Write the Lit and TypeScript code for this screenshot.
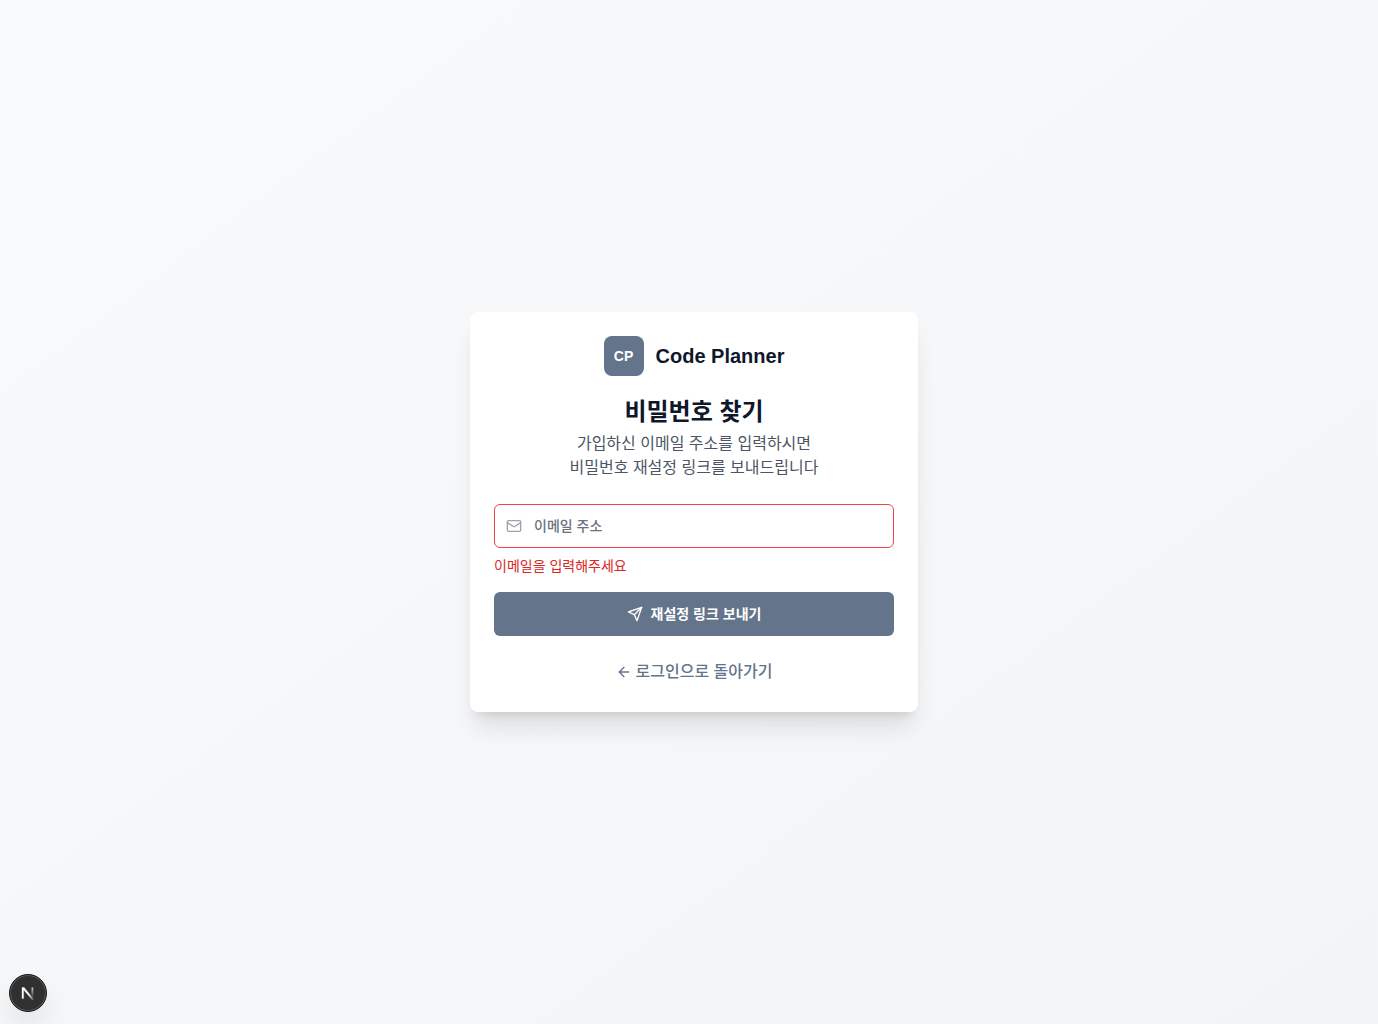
import { LitElement, html, css } from "lit";
import { customElement } from "lit/decorators.js";

@customElement("app-root")
export class AppRoot extends LitElement {
  static styles = css`
    :host {
      display: block;
      font-family: "Liberation Sans", "Noto Sans CJK KR", sans-serif;
      font-size: 16px;
      line-height: 24px;
      color: #0f172a;
    }
    *, *::before, *::after { box-sizing: border-box; }
    .page {
      min-height: 100vh;
      display: flex;
      align-items: center;
      justify-content: center;
      padding: 16px 16px 16px 26px;
      background: linear-gradient(to bottom right, #f8fafc, #f3f4f6);
    }
    .card {
      width: 100%;
      max-width: 448px;
      padding: 24px 24px 28px;
      display: flex;
      flex-direction: column;
      gap: 24px;
      background: #fff;
      border-radius: 8px;
      box-shadow: 0 20px 25px -5px rgb(0 0 0 / 0.1), 0 8px 10px -6px rgb(0 0 0 / 0.1);
    }
    .header { text-align: center; }
    .brand {
      display: flex;
      align-items: center;
      justify-content: center;
      gap: 12px;
      margin-bottom: 16px;
    }
    .mark {
      width: 40px;
      height: 40px;
      display: flex;
      align-items: center;
      justify-content: center;
      border-radius: 8px;
      background: #64748b;
      color: #fff;
      font-size: 14px;
      font-weight: 700;
    }
    .name { font-size: 20px; line-height: 28px; font-weight: 700; }
    h1 { margin: 0; font-size: 24px; line-height: 40px; font-weight: 700; }
    .lead { margin: 0; color: #4b5563; }
    form { display: flex; flex-direction: column; gap: 16px; }
    .group { display: flex; flex-direction: column; gap: 8px; }
    .field {
      display: flex;
      align-items: center;
      gap: 12px;
      height: 44px;
      padding: 0 11px;
      border: 1px solid #ef4444;
      border-radius: 6px;
      background: #fff;
      color: #9ca3af;
    }
    svg { display: block; flex: none; }
    input {
      flex: 1;
      min-width: 0;
      height: 100%;
      padding: 0;
      border: 0;
      outline: 0;
      background: none;
      font: inherit;
      font-size: 14px;
      font-weight: 500;
      color: #0f172a;
    }
    input::placeholder { color: #6b7280; opacity: 1; }
    .error { margin: 0; font-size: 14px; line-height: 20px; color: #dc2626; }
    .submit {
      display: flex;
      align-items: center;
      justify-content: center;
      gap: 8px;
      height: 44px;
      padding: 0 16px;
      border: 0;
      border-radius: 6px;
      background: #64748b;
      color: #fff;
      font: inherit;
      font-size: 14px;
      font-weight: 700;
      cursor: pointer;
    }
    .back {
      align-self: center;
      display: flex;
      align-items: center;
      gap: 4px;
      color: #64748b;
      font-weight: 500;
      text-decoration: none;
    }
    .dev {
      position: fixed;
      left: 9px;
      bottom: 12px;
      width: 38px;
      height: 38px;
      display: flex;
      align-items: center;
      justify-content: center;
      padding: 0;
      border: 1px solid #171717;
      border-radius: 50%;
      background: #303030;
      box-shadow: inset 0 0 0 1px #5a5a5a, 0 16px 32px -8px rgb(0 0 0 / 0.24);
    }
  `;

  render() {
    return html`
      <main class="page">
        <section class="card">
          <header class="header">
            <div class="brand">
              <span class="mark">CP</span>
              <span class="name">Code Planner</span>
            </div>
            <h1>비밀번호 찾기</h1>
            <p class="lead">가입하신 이메일 주소를 입력하시면<br />비밀번호 재설정 링크를 보내드립니다</p>
          </header>
          <form novalidate @submit=${(e: Event) => e.preventDefault()}>
            <div class="group">
              <label class="field" for="email">
                <svg width="16" height="16" viewBox="0 0 24 24" fill="none" stroke="currentColor" stroke-width="2" stroke-linecap="round" stroke-linejoin="round" aria-hidden="true">
                  <rect width="20" height="16" x="2" y="4" rx="2"></rect>
                  <path d="m22 7-8.97 5.7a1.94 1.94 0 0 1-2.06 0L2 7"></path>
                </svg>
                <input id="email" type="email" placeholder="이메일 주소" aria-label="이메일 주소" aria-invalid="true" aria-describedby="email-error" />
              </label>
              <p class="error" id="email-error">이메일을 입력해주세요</p>
            </div>
            <button class="submit" type="submit">
              <svg width="16" height="16" viewBox="0 0 24 24" fill="none" stroke="currentColor" stroke-width="2" stroke-linecap="round" stroke-linejoin="round" aria-hidden="true">
                <path d="m22 2-7 20-4-9-9-4Z"></path>
                <path d="M22 2 11 13"></path>
              </svg>
              재설정 링크 보내기
            </button>
          </form>
          <a class="back" href="#login">
            <svg width="16" height="16" viewBox="0 0 24 24" fill="none" stroke="currentColor" stroke-width="2" stroke-linecap="round" stroke-linejoin="round" aria-hidden="true">
              <path d="m12 19-7-7 7-7"></path>
              <path d="M19 12H5"></path>
            </svg>
            로그인으로 돌아가기
          </a>
        </section>
        <button class="dev" type="button" aria-label="Next.js">
          <svg width="14" height="14" viewBox="0 0 14 14" fill="none" aria-hidden="true">
            <defs>
              <linearGradient id="diag" x1="8" y1="8" x2="12" y2="13" gradientUnits="userSpaceOnUse">
                <stop stop-color="#fff"></stop>
                <stop offset="1" stop-color="#fff" stop-opacity="0.3"></stop>
              </linearGradient>
              <linearGradient id="bar" x1="11" y1="1" x2="11" y2="12" gradientUnits="userSpaceOnUse">
                <stop stop-color="#fff" stop-opacity="0.8"></stop>
                <stop offset="1" stop-color="#fff" stop-opacity="0"></stop>
              </linearGradient>
            </defs>
            <path d="M1 1.500H3.200L12.600 13.200L11.300 14L2.600 3.800V12.500H1Z" fill="url(#diag)" stroke="url(#diag)" stroke-width="0.300"></path>
            <path d="M11.400 1.500V11.500" stroke="url(#bar)" stroke-width="1.800"></path>
          </svg>
        </button>
      </main>
    `;
  }
}
